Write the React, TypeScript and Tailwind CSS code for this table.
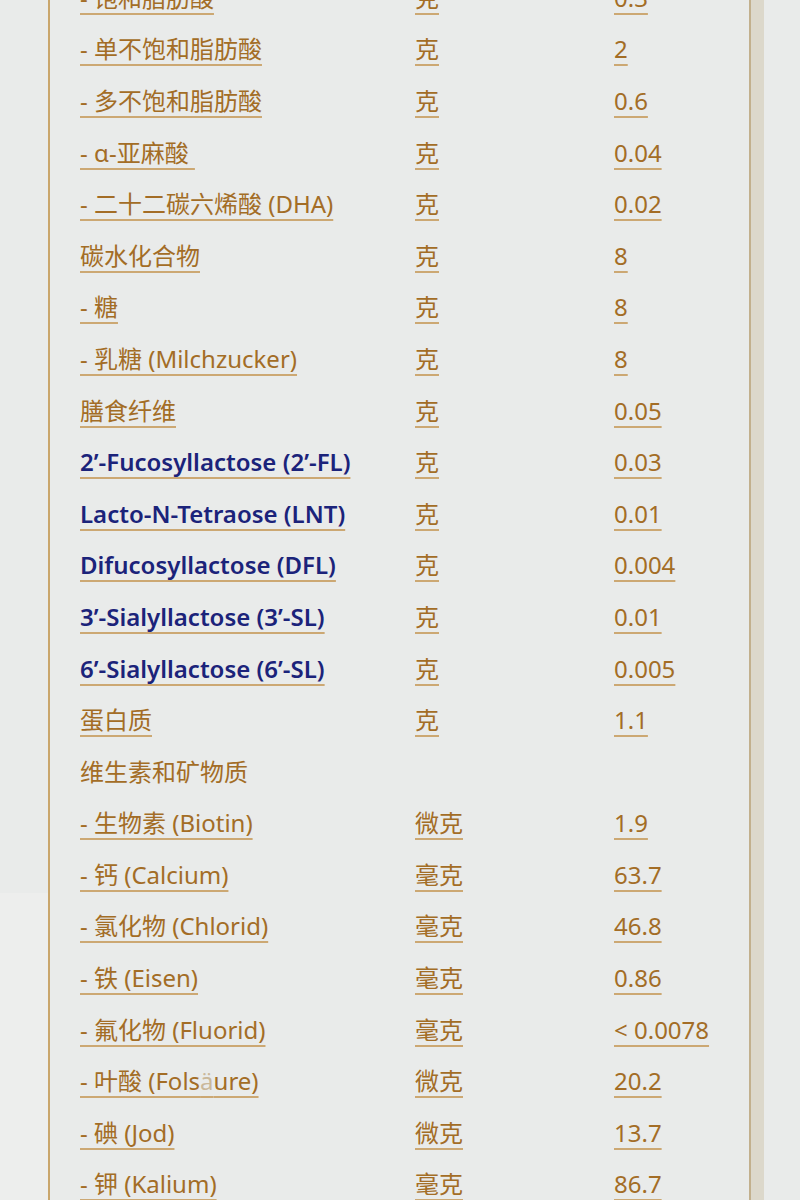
import React from 'react';

type Row = { label: string; unit?: string; value?: string; blue?: boolean; plain?: boolean };

const rows: Row[] = [
  { label: '- 饱和脂肪酸', unit: '克', value: '0.3' },
  { label: '- 单不饱和脂肪酸', unit: '克', value: '2' },
  { label: '- 多不饱和脂肪酸', unit: '克', value: '0.6' },
  { label: '- α-亚麻酸 ', unit: '克', value: '0.04' },
  { label: '- 二十二碳六烯酸 (DHA)', unit: '克', value: '0.02' },
  { label: '碳水化合物', unit: '克', value: '8' },
  { label: '- 糖', unit: '克', value: '8' },
  { label: '- 乳糖 (Milchzucker)', unit: '克', value: '8' },
  { label: '膳食纤维', unit: '克', value: '0.05' },
  { label: '2’-Fucosyllactose (2’-FL)', unit: '克', value: '0.03', blue: true },
  { label: 'Lacto-N-Tetraose (LNT)', unit: '克', value: '0.01', blue: true },
  { label: 'Difucosyllactose (DFL)', unit: '克', value: '0.004', blue: true },
  { label: '3’-Sialyllactose (3’-SL)', unit: '克', value: '0.01', blue: true },
  { label: '6’-Sialyllactose (6’-SL)', unit: '克', value: '0.005', blue: true },
  { label: '蛋白质', unit: '克', value: '1.1' },
  { label: '维生素和矿物质', plain: true },
  { label: '- 生物素 (Biotin)', unit: '微克', value: '1.9' },
  { label: '- 钙 (Calcium)', unit: '毫克', value: '63.7' },
  { label: '- 氯化物 (Chlorid)', unit: '毫克', value: '46.8' },
  { label: '- 铁 (Eisen)', unit: '毫克', value: '0.86' },
  { label: '- 氟化物 (Fluorid)', unit: '毫克', value: '< 0.0078' },
  { label: '- 叶酸 (Folsäure)', unit: '微克', value: '20.2' },
  { label: '- 碘 (Jod)', unit: '微克', value: '13.7' },
  { label: '- 钾 (Kalium)', unit: '毫克', value: '86.7' },
];

const link =
  'underline decoration-[#cca873] decoration-2 underline-offset-[6px] whitespace-pre';
const gold = 'text-[#a36d26]';

function Label({ row }: { row: Row }) {
  if (row.plain) return <span className={`${gold} whitespace-nowrap`}>{row.label}</span>;
  if (row.blue)
    return <span className={`${link} text-[#1b237a] font-semibold decoration-[#7f86b8]`}>{row.label}</span>;
  if (row.label.includes('Folsäure')) {
    return (
      <span className={`${link} ${gold}`}>
        - 叶酸 (Fols<span className="text-[#c9b89a]">ä</span>ure)
      </span>
    );
  }
  return <span className={`${link} ${gold}`}>{row.label}</span>;
}

export default function App() {
  return (
    <div
      className="w-[800px] h-[1200px] overflow-hidden bg-[#e9ebea] flex"
      style={{ fontFamily: '"Noto Sans", "Noto Sans CJK SC", sans-serif' }}
    >
      <div className="w-[48px] flex flex-col">
        <div className="h-[893px]" />
        <div className="flex-1 bg-[#edeeed]" />
      </div>
      <div className="w-[703px] h-full border-l-2 border-r-2 border-l-[#c9a66c] border-r-[#c2b08d]">
        <div className="-mt-[28px] pl-[30px]">
          {rows.map((r, i) => (
            <div key={i} className="h-[51.6px] grid grid-cols-[335px_199px_1fr] items-center text-[24px] leading-none">
              <div><Label row={r} /></div>
              <div>{r.unit && <span className={`${link} ${gold}`}>{r.unit}</span>}</div>
              <div>{r.value && <span className={`${link} ${gold}`}>{r.value}</span>}</div>
            </div>
          ))}
        </div>
      </div>
      <div className="w-[13px] bg-[#dcd8cb]" />
      <div className="flex-1" />
    </div>
  );
}
